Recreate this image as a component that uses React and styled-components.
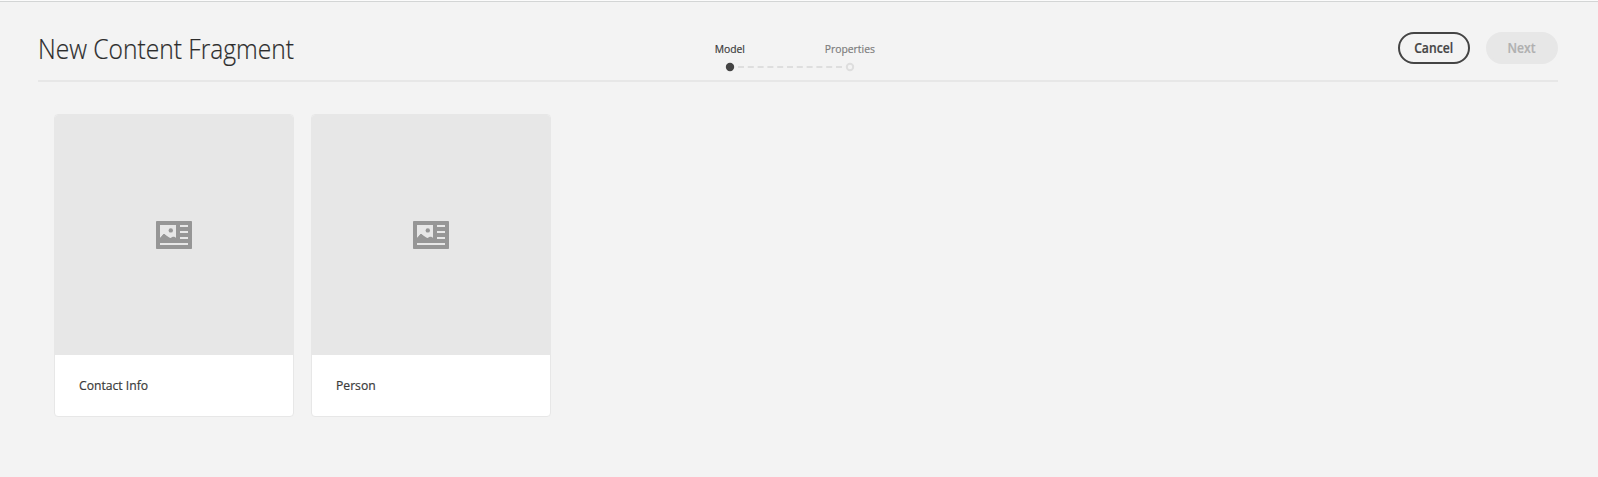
import React from 'react';
import styled, { createGlobalStyle } from 'styled-components';

const GlobalStyle = createGlobalStyle`
  *, *::before, *::after { box-sizing: border-box; }
  body {
    margin: 0;
    background: #f3f3f3;
    color: #444;
    font-family: 'Open Sans', 'Noto Sans', sans-serif;
  }
`;

const Page = styled.div`
  min-height: 477px;
  border-top: 1px solid #fbfbfb;
`;

const Wizard = styled.main`
  border-top: 1px solid #d3d5d5;
  padding: 0 40px 0 38px;
`;

const Header = styled.header`
  display: grid;
  grid-template-columns: 1fr 240px 1fr;
  height: 80px;
  border-bottom: 2px solid #e7e7e7;
`;

/* Slightly condensed lettering */
const Label = styled.span`
  display: inline-block;
  transform: scaleX(${(p) => p.$scale || 0.9});
  transform-origin: ${(p) => p.$origin || 'center'};
  -webkit-text-stroke: 0.2px currentColor;
  white-space: nowrap;
`;

const Title = styled.h1`
  margin: 0;
  padding: 28px 0 0;
  font-size: 27px;
  line-height: 38px;
  font-weight: 300;
  color: #2c2c2c;
  white-space: nowrap;
`;

const Steps = styled.ol`
  display: flex;
  width: 240px;
  margin: 0;
  padding: 38px 0 0;
  list-style: none;
  transform: translateX(-8px);
`;

const Step = styled.li`
  display: flex;
  flex-direction: column;
  align-items: center;
  width: 120px;
  font-size: 11.5px;
  line-height: 18px;
  color: ${(p) => (p.$active ? '#3a3a3a' : '#7c7c7c')};
  font-weight: ${(p) => (p.$active ? 500 : 400)};
`;

const Track = styled.svg`
  display: block;
  width: 120px;
  height: 10px;
  margin-top: 4px;
  overflow: visible;
`;

const Actions = styled.div`
  display: flex;
  justify-content: flex-end;
  gap: 16px;
  padding-top: 30px;
`;

const Button = styled.button`
  width: 72px;
  height: 32px;
  padding: 0 0 1px;
  border: 2px solid ${(p) => (p.disabled ? '#e7e7e7' : '#444')};
  border-radius: 16px;
  background: ${(p) => (p.disabled ? '#e7e7e7' : 'transparent')};
  color: ${(p) => (p.disabled ? '#b0b0b0' : '#444')};
  font: inherit;
  font-size: 13.5px;
  font-weight: 600;
  line-height: 20px;
`;

const Cards = styled.section`
  display: flex;
  gap: 17px;
  padding: 32px 16px;
`;

const Card = styled.article`
  width: 240px;
  height: 303px;
  border: 1px solid #e7e7e7;
  border-radius: 4px;
  background: #fff;
  overflow: hidden;
`;

const Preview = styled.div`
  display: flex;
  align-items: center;
  justify-content: center;
  height: 240px;
  background: #e7e7e7;
`;

const CardTitle = styled.h2`
  margin: 0;
  padding: 20px 24px 0;
  font-size: 13.5px;
  line-height: 20px;
  font-weight: 500;
  color: #3a3a3a;
`;

const FragmentIcon = () => (
  <svg width="36" height="28" viewBox="0 0 36 28" aria-hidden="true">
    <rect width="36" height="28" rx="0.8" fill="#969696" />
    <path fill="#e7e7e7" d="M4 4h16v13l-2-1-3 1.6L12.5 16 8 13 4 17zM24 4h8v2h-8zM24 10h8v2h-8zM24 16h8v2h-8zM4 22h28v2H4z" />
    <path fill="#969696" d="M4 17.2l3.5-4.2h1l3.7 4 1.8.2 2.8-1.5h1.5L20 17v2H4z" />
    <circle cx="14.8" cy="9.4" r="2.2" fill="#969696" />
  </svg>
);

const models = ['Contact Info', 'Person'];

export default function App() {
  return (
    <Page>
      <GlobalStyle />
      <Wizard>
        <Header>
          <Title><Label $origin="left" $scale={0.91}>New Content Fragment</Label></Title>
          <Steps>
            <Step $active>
              <Label>Model</Label>
              <Track viewBox="0 0 120 10">
                <circle cx="60" cy="5" r="4.2" fill="#444" />
                <path d="M68 5H172.4" stroke="#dedede" strokeWidth="2" strokeDasharray="6 3.8" />
              </Track>
            </Step>
            <Step>
              <Label>Properties</Label>
              <Track viewBox="0 0 120 10">
                <circle cx="60" cy="5" r="3.2" fill="#f3f3f3" stroke="#dedede" strokeWidth="2" />
              </Track>
            </Step>
          </Steps>
          <Actions>
            <Button><Label>Cancel</Label></Button>
            <Button disabled><Label>Next</Label></Button>
          </Actions>
        </Header>
        <Cards>
          {models.map((name) => (
            <Card key={name}>
              <Preview><FragmentIcon /></Preview>
              <CardTitle><Label $origin="left">{name}</Label></CardTitle>
            </Card>
          ))}
        </Cards>
      </Wizard>
    </Page>
  );
}
